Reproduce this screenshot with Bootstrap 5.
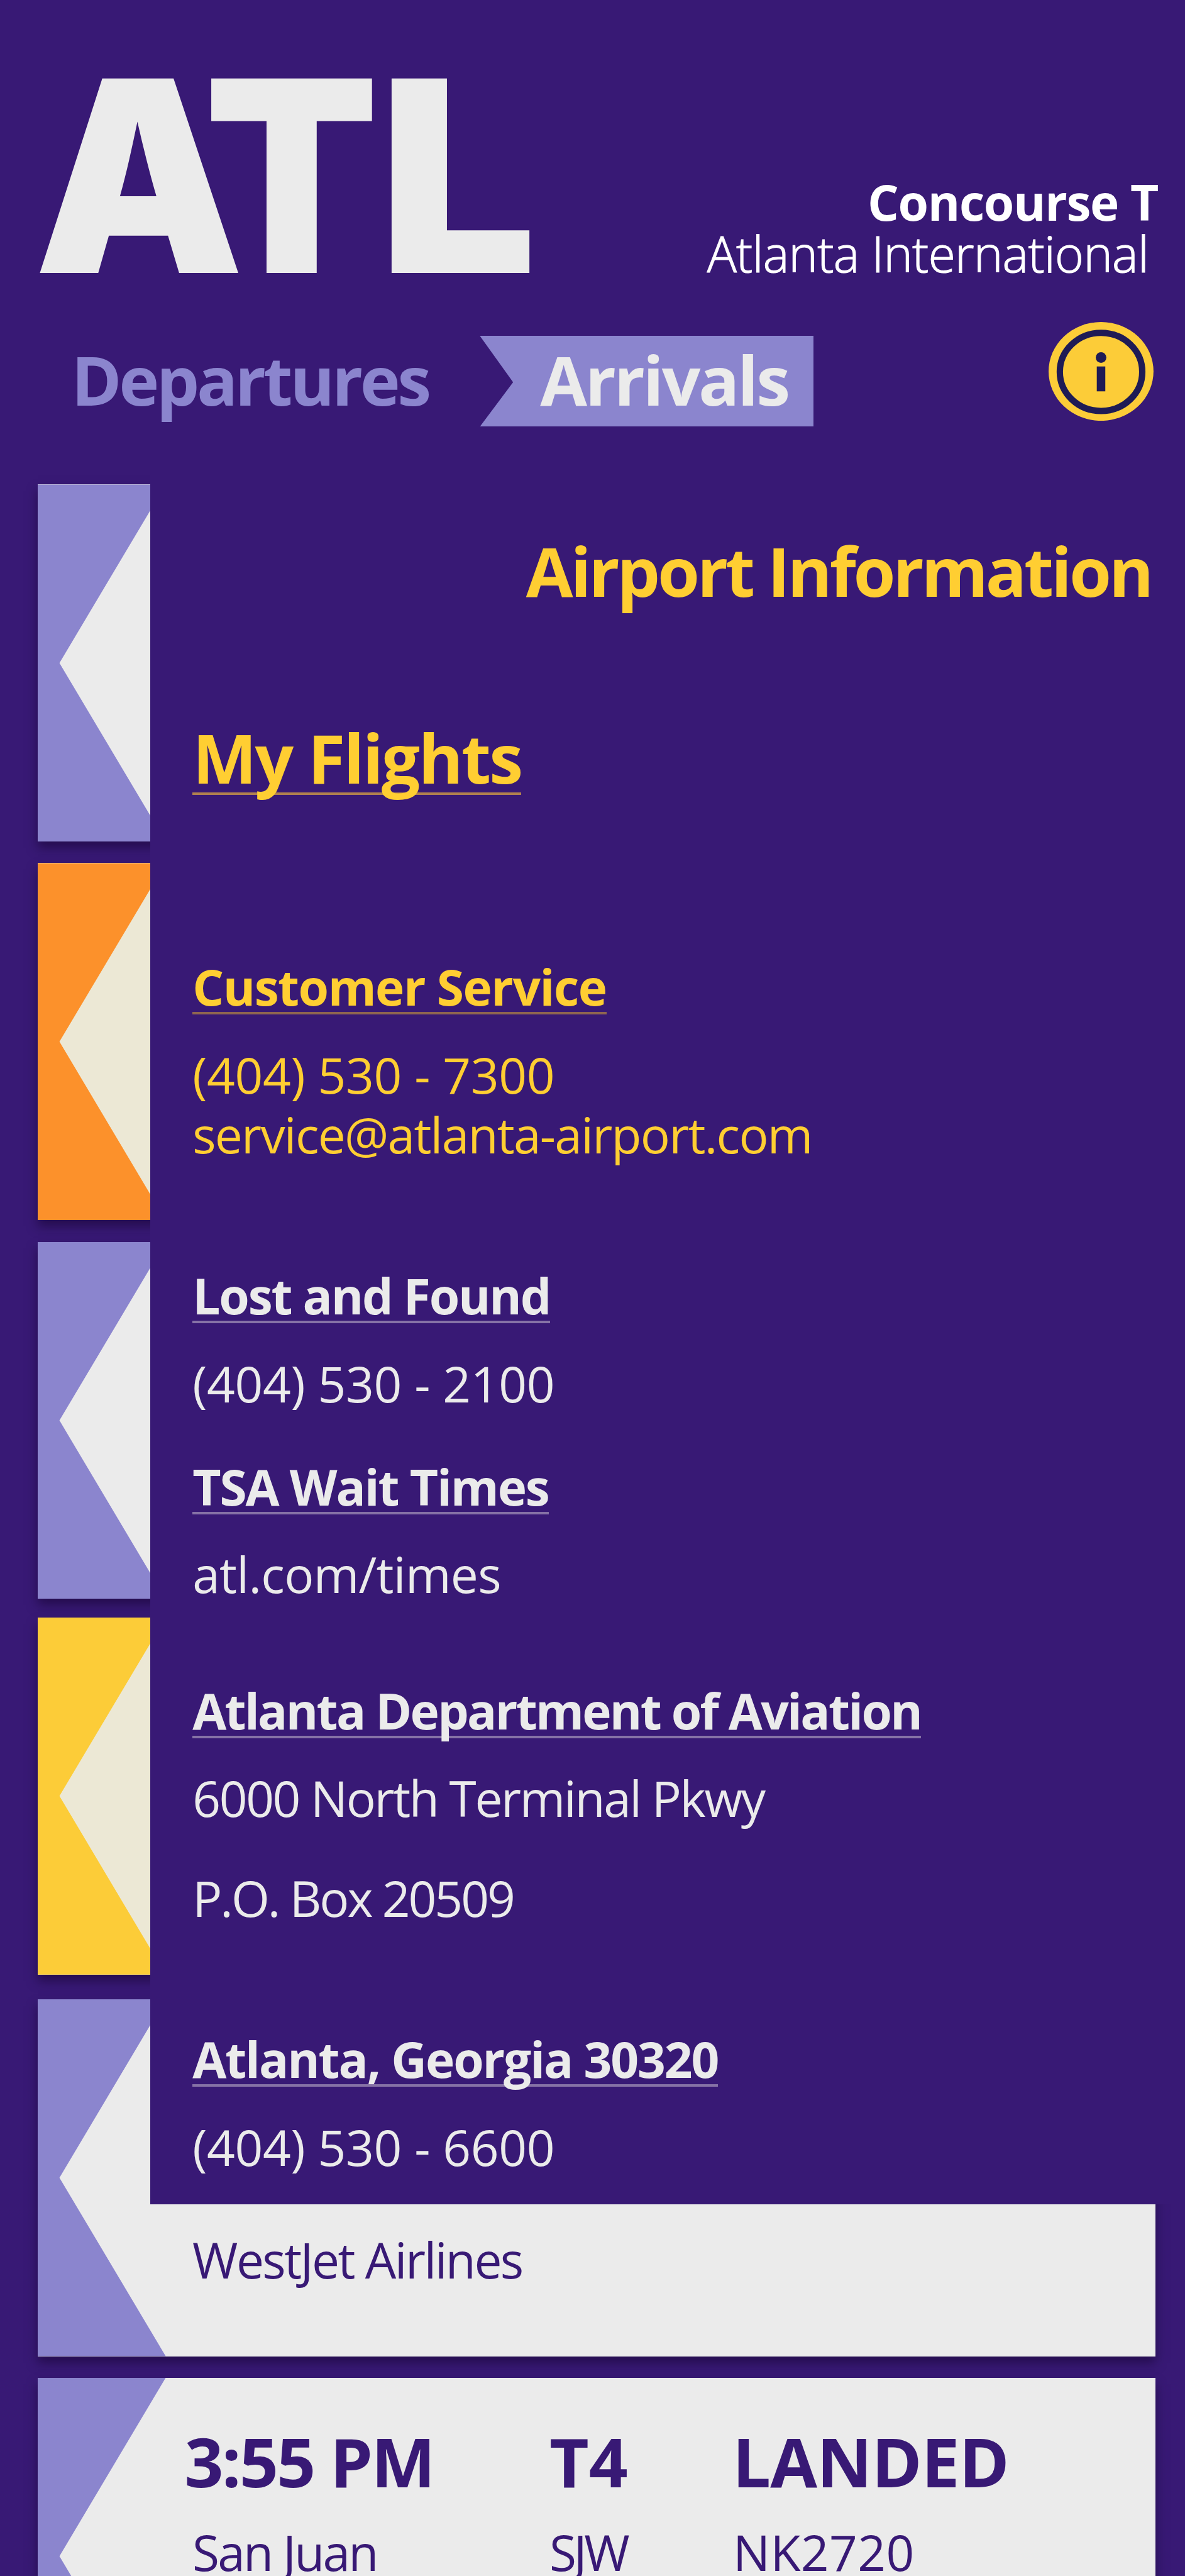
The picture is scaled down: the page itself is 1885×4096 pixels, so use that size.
<!DOCTYPE html>
<html lang="en">
<head>
<meta charset="utf-8">
<title>ATL – Airport Information</title>
<link href="https://cdn.jsdelivr.net/npm/bootstrap@5.3.0/dist/css/bootstrap.min.css" rel="stylesheet">
<style>
  :root { --ink:#381975; --lilac:#8b85ce; --paper:#ebebeb; --cream:#ece8d5; --sun:#fccc38; --orange:#fc912b; }
  body { background:var(--ink); }
  .screen { width:1885px; height:4096px; background:var(--ink); color:var(--paper); font-family:"Open Sans",sans-serif; }
  .txt-lg, .txt-sm { white-space:nowrap; letter-spacing:var(--ls,0px); }
  .txt-lg { font-size:108.4px; line-height:120px; font-weight:700; }
  .txt-sm { font-size:78.4px; line-height:89px; font-weight:400; }
  .strong { font-weight:700; }
  .sun { color:#ffce32; }

  /* masthead */
  .masthead { height:534.1px; padding:66.5px 43px 0 54px; }
  .wordmark { font-family:Inter,sans-serif; font-weight:900; font-size:425px; line-height:425px; }
  .wordmark span { display:block; transform-origin:0 0; }
  .wm-a { width:271px; transform:scaleX(.99); }
  .wm-t { width:277px; transform:scaleX(.952); }
  .wm-l { width:240px; transform:scaleX(1.05); }
  .place { padding-top:213.5px; color:#fff; }
  .place .txt-sm { line-height:82.1px; }
  .place .city { font-weight:300; -webkit-text-stroke:1.2px #fff; padding-right:15px; }

  /* tabs */
  .tabs { height:144.3px; padding:0 49.8px 0 113.5px; }
  .tab-off { width:649.8px; color:var(--lilac); padding-bottom:6.6px; }
  .tab-on { width:530.7px; background:var(--lilac); padding:9px 0 0 96px; clip-path:polygon(0 0,100% 0,100% 100%,0 100%,52.9px 51%); }
  .info { width:166.9px; height:157.1px; margin-top:-21.9px; }

  /* flight cards */
  .board { padding:92px 47.1px 0 60.1px; }
  .flight { height:567.7px; background:var(--paper); color:var(--ink); box-shadow:0 10px 16px rgba(18,0,40,.5); }
  .flight::before { content:""; position:absolute; inset:0 auto 0 0; width:203.5px; background:var(--flag,var(--lilac)); clip-path:polygon(0 0,100% 0,34.5px 50%,100% 100%,0 100%); }
  .flight.late { --flag:var(--orange); background:var(--cream); }
  .flight.soon { --flag:var(--sun); background:var(--cream); }
  .airline { padding:368.9px 0 0 246px; }
  .details { padding:72.7px 0 0 233.4px; }
  .details .sub { margin-top:39.5px; }
  .c-time { width:580.5px; } .c-gate { width:291px; }

  /* information panel laid over the cards */
  .panel { left:238.6px; right:0; top:22px; height:2805px; padding:146.3px 0 0 67.6px; background:var(--ink); }
  .panel .title { padding-right:54px; }
  .under { display:table; box-shadow:inset 0 -4px var(--line,#8672a6); }
</style>
</head>
<body>
<div class="screen overflow-hidden">
  <header class="masthead d-flex justify-content-between align-items-start">
    <div class="wordmark d-flex"><span class="wm-a">A</span><span class="wm-t">T</span><span class="wm-l">L</span></div>
    <div class="place text-end">
      <div class="txt-sm strong" style="--ls:-1.36px">Concourse T</div>
      <div class="txt-sm city" style="--ls:-.65px">Atlanta International</div>
    </div>
  </header>

  <nav class="tabs d-flex align-items-stretch">
    <div class="tab-off txt-lg d-flex align-items-center" style="--ls:-4.49px">Departures</div>
    <div class="tab-on txt-lg" style="--ls:-3.23px">Arrivals</div>
    <svg class="info ms-auto" viewBox="0 0 170 160" preserveAspectRatio="none">
      <ellipse cx="85" cy="80" rx="85" ry="80" fill="#fccc38"/>
      <ellipse cx="85" cy="80.8" rx="66.8" ry="63.3" fill="none" stroke="#1f1b55" stroke-width="10.3"/>
      <circle cx="85" cy="57.6" r="8.6" fill="#1f1b55"/>
      <rect x="78.1" y="72" width="13.8" height="40.3" fill="#1f1b55"/>
    </svg>
  </nav>

  <main class="board position-relative">
    <article class="flight position-relative" style="margin-bottom:34.4px"></article>
    <article class="flight late position-relative" style="margin-bottom:34.6px"></article>
    <article class="flight position-relative" style="margin-bottom:29.5px"></article>
    <article class="flight soon position-relative" style="margin-bottom:39.2px"></article>
    <article class="flight position-relative" style="margin-bottom:34.2px">
      <div class="airline txt-sm" style="--ls:-2.56px">WestJet Airlines</div>
    </article>
    <article class="flight position-relative">
      <div class="details">
        <div class="d-flex txt-lg">
          <div class="c-time" style="letter-spacing:-2.69px">3:55 PM</div>
          <div class="c-gate">T4</div>
          <div style="letter-spacing:-.9px">LANDED</div>
        </div>
        <div class="d-flex txt-sm sub">
          <div class="c-time" style="padding-left:12.5px;letter-spacing:-2.76px">San Juan</div>
          <div class="c-gate" style="letter-spacing:-4.4px">SJW</div>
          <div style="padding-left:1px;letter-spacing:.4px">NK2720</div>
        </div>
      </div>
    </article>

    <section class="panel position-absolute">
      <div class="title txt-lg sun text-end" style="--ls:-4.15px">Airport Information</div>
      <div class="under txt-lg sun" style="--ls:-2.79px;--line:#b0804f;margin-top:177.1px">My Flights</div>

      <div class="under txt-sm strong sun" style="--ls:-1.51px;--line:#8f6650;margin-top:260.3px">Customer Service</div>
      <div class="txt-sm sun" style="--ls:-.29px;margin-top:51.3px">(404) 530 - 7300</div>
      <div class="txt-sm sun" style="--ls:-1.73px;margin-top:5.7px">service@atlanta-airport.com</div>

      <div class="under txt-sm strong" style="--ls:-2.16px;margin-top:167.4px">Lost and Found</div>
      <div class="txt-sm" style="--ls:-.29px;margin-top:50.8px">(404) 530 - 2100</div>

      <div class="under txt-sm strong" style="--ls:-2.11px;margin-top:74.4px">TSA Wait Times</div>
      <div class="txt-sm" style="--ls:-.69px;margin-top:50.4px">atl.com/times</div>

      <div class="under txt-sm strong" style="--ls:-2.7px;margin-top:128px">Atlanta Department of Aviation</div>
      <div class="txt-sm" style="--ls:-2.35px;margin-top:50.4px">6000 North Terminal Pkwy</div>
      <div class="txt-sm" style="--ls:-3.03px;margin-top:70px">P.O. Box 20509</div>

      <div class="under txt-sm strong" style="--ls:-2.1px;margin-top:166.3px">Atlanta, Georgia 30320</div>
      <div class="txt-sm" style="--ls:-.29px;margin-top:51.3px">(404) 530 - 6600</div>
    </section>
  </main>
</div>
<script src="https://cdn.jsdelivr.net/npm/bootstrap@5.3.0/dist/js/bootstrap.bundle.min.js"></script>
</body>
</html>
